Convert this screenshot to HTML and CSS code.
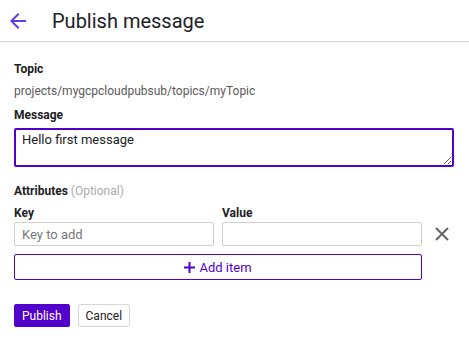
FILE: index.html
```html
<!DOCTYPE html>
<html lang="en">
<head>
    <meta charset="UTF-8">
    <meta name="viewport" content="width=device-width, initial-scale=1.0">
    <title>Publish message</title>
    <link rel="stylesheet" href="styles.css">
</head>
<body>
    <header class="topbar">
        <button class="back-btn" aria-label="Back">
            <svg width="24" height="24" viewBox="0 0 24 24"><path d="M20 11H7.83l5.59-5.59L12 4l-8 8 8 8 1.41-1.41L7.83 13H20v-2z" fill="currentColor"/></svg>
        </button>
        <h1>Publish message</h1>
    </header>

    <main class="form">
        <div class="field">
            <div class="label">Topic</div>
            <div class="topic-path">projects/mygcpcloudpubsub/topics/myTopic</div>
        </div>

        <div class="field">
            <div class="label">Message</div>
            <textarea class="message">Hello first message</textarea>
        </div>

        <div class="attributes">
            <div class="label">Attributes <span class="optional">(Optional)</span></div>
            <div class="attr-row">
                <div class="attr-col">
                    <div class="label">Key</div>
                    <input class="text-input" type="text" placeholder="Key to add">
                </div>
                <div class="attr-col">
                    <div class="label">Value</div>
                    <input class="text-input" type="text">
                </div>
                <button class="remove-btn" aria-label="Remove">
                    <svg width="14" height="14" viewBox="0 0 14 14"><path d="M1 1L13 13M13 1L1 13" stroke="currentColor" stroke-width="2"/></svg>
                </button>
            </div>
            <button class="add-btn">
                <svg width="11" height="11" viewBox="0 0 11 11"><path d="M5.5 0v11M0 5.5h11" stroke="currentColor" stroke-width="2"/></svg>
                Add item
            </button>
        </div>

        <div class="actions">
            <button class="btn-primary">Publish</button>
            <button class="btn-secondary">Cancel</button>
        </div>
    </main>
</body>
</html>
```

FILE: styles.css
```css
body {
    font-family: Roboto, 'Liberation Sans', sans-serif;
    margin: 0;
    padding: 0;
    background: #fff;
    color: #202124;
}
.topbar {
    display: flex;
    align-items: center;
    height: 42px;
    border-bottom: 1px solid #d6d6d6;
    box-sizing: border-box;
    padding-left: 6px;
    padding-top: 1px;
}
.back-btn {
    background: none;
    border: none;
    padding: 0;
    color: #5f3fe0;
    display: flex;
    width: 24px;
    height: 24px;
    margin-right: 22px;
}
h1 {
    margin: 0;
    font-size: 20px;
    font-weight: 400;
    color: #202124;
}
.form {
    padding: 20px 15px 0 14px;
}
.label {
    font-size: 12px;
    font-weight: 700;
    line-height: 14px;
    margin-bottom: 8px;
}
.field {
    margin-bottom: 10px;
}
.topic-path {
    font-size: 12px;
    color: #5a5a5a;
    line-height: 14px;
}
.message {
    display: block;
    box-sizing: border-box;
    width: 440px;
    height: 39px;
    margin-top: -2px;
    border: 2px solid #5200cc;
    border-radius: 2px;
    padding: 2px 6px;
    font-family: inherit;
    font-size: 13px;
    color: #202124;
    outline: none;
}
.attributes {
    margin-top: 17px;
}
.optional {
    font-weight: 400;
    color: #aaa;
}
.attr-row {
    display: flex;
    align-items: flex-end;
    gap: 8px;
    margin-bottom: 8px;
}
.attr-col {
    width: 200px;
}
.attr-col .label {
    margin-bottom: 2px;
}
.text-input {
    display: block;
    box-sizing: border-box;
    width: 200px;
    height: 24px;
    border: 1px solid #cfcfcf;
    border-radius: 2px;
    padding: 0 7px;
    font-family: inherit;
    font-size: 13px;
}
.text-input::placeholder {
    color: #777;
}
.remove-btn {
    background: none;
    border: none;
    color: #666;
    padding: 0;
    width: 14px;
    height: 14px;
    margin: 0 0 5px 5px;
    display: flex;
}
.add-btn {
    box-sizing: border-box;
    width: 408px;
    height: 26px;
    border: 1px solid #5200cc;
    border-radius: 2px;
    background: #fff;
    color: #5200cc;
    font-family: inherit;
    font-size: 13px;
    display: flex;
    align-items: center;
    justify-content: center;
    gap: 4px;
}
.actions {
    margin-top: 24px;
    display: flex;
    gap: 8px;
}
.btn-primary, .btn-secondary {
    font-family: inherit;
    font-size: 12px;
    height: 23px;
    border-radius: 2px;
    padding: 0 7px;
}
.btn-primary {
    background: #5200cc;
    color: #fff;
    border: 1px solid #5200cc;
}
.btn-secondary {
    background: #fff;
    color: #202124;
    border: 1px solid #d6d6d6;
}
```
